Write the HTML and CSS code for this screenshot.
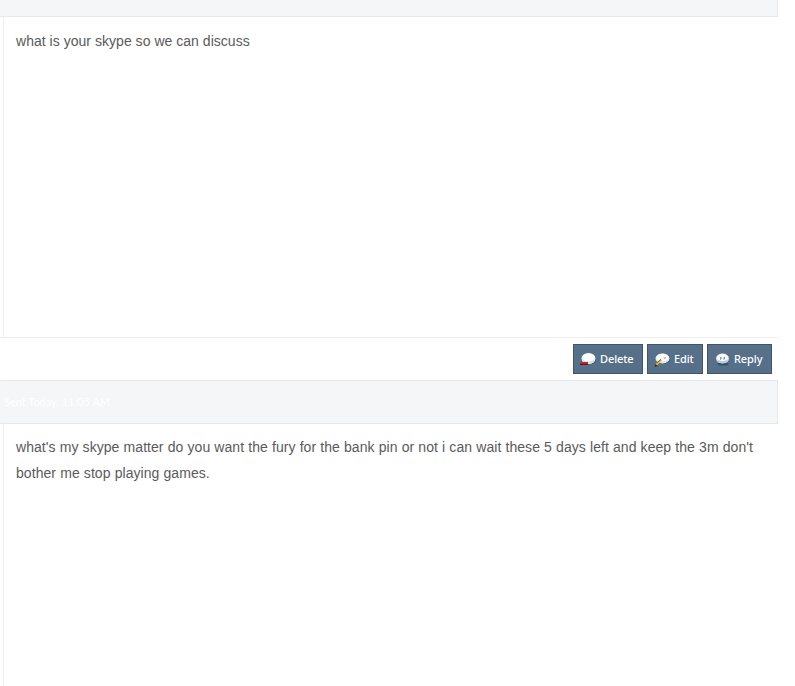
FILE: index.html
```html
<!DOCTYPE html>
<html lang="en">
<head>
<meta charset="utf-8">
<title>Messages</title>
<link rel="stylesheet" href="styles.css">
</head>
<body>
<div class="thread">
  <div class="head head-cut"></div>
  <div class="msg msg-short"><p>what is your skype so we can discuss</p></div>
  <div class="actions">
    <a class="btn btn-delete">
      <svg class="ico" viewBox="0 0 16 16" width="16" height="16"><ellipse cx="9.500" cy="8.500" rx="7" ry="5" fill="#2f4a62" opacity=".55"/><ellipse cx="8.500" cy="7.500" rx="7" ry="5.500" fill="#f1f4f6"/><ellipse cx="8.500" cy="9" rx="6" ry="3.500" fill="#d5dee5"/><ellipse cx="8.500" cy="6.500" rx="6" ry="4" fill="#fbfcfc"/><rect x="0" y="11" width="8" height="3" fill="#c4202c"/><rect x="0" y="13" width="8" height="1" fill="#6a1218"/></svg>
      <span>Delete</span></a>
    <a class="btn btn-edit">
      <svg class="ico" viewBox="0 0 16 16" width="16" height="16"><ellipse cx="9.500" cy="8" rx="7" ry="5" fill="#2f4a62" opacity=".55"/><ellipse cx="8.500" cy="7.500" rx="7" ry="5" fill="#e3e9ee"/><ellipse cx="8.500" cy="6.500" rx="6" ry="3.800" fill="#fbfcfc"/><circle cx="11" cy="7" r="1.100" fill="#eba7b0"/><path d="M0.500 16l1-3 5-5 1.500 1.500-5 5z" fill="#e6b53a"/><path d="M2.500 12l4-4 .6.6-4 4z" fill="#8a6a1c"/><path d="M0.500 16l1-3 2 2z" fill="#1d1d1d"/></svg>
      <span>Edit</span></a>
    <a class="btn btn-reply">
      <svg class="ico" viewBox="0 0 16 16" width="16" height="16"><ellipse cx="8" cy="13" rx="5.500" ry="1.500" fill="#2b4358" opacity=".7"/><ellipse cx="7.500" cy="7.500" rx="6.500" ry="5" fill="#dfe8ee"/><ellipse cx="7.500" cy="10" rx="5" ry="2.200" fill="#bccdda"/><ellipse cx="7.500" cy="6.500" rx="5.500" ry="3.500" fill="#fbfcfc"/><path d="M5 6h1.500v2h-.7v1h-.8zM8.500 6h1.500v2h-.7v1h-.8z" fill="#7b9db8"/></svg>
      <span>Reply</span></a>
  </div>
  <div class="head"><span class="sent">Sent Today, 11:05 AM</span></div>
  <div class="msg"><p>what's my skype matter do you want the fury for the bank pin or not i can wait these 5 days left and keep the 3m don't bother me stop playing games.</p></div>
</div>
</body>
</html>
```
FILE: styles.css
```css
html, body {
  margin: 0;
  padding: 0;
  background: #fff;
}
body {
  height: 686px;
  overflow: hidden;
}
.thread {
  width: 778px;
  font-family: "Liberation Sans", Arial, sans-serif;
  font-size: 14px;
  color: #5a5a5a;
}
.head {
  box-sizing: border-box;
  height: 44px;
  padding: 0 3px;
  display: flex;
  align-items: center;
  background: #f5f6f8;
  border: 1px solid #e6e7e9;
  border-left-color: #f5f6f8;
}
.head-cut {
  height: 17px;
  border-top: 0;
}
.sent {
  font-family: Lato, sans-serif;
  font-size: 11px;
  line-height: 14px;
  color: #fff;
}
.msg {
  box-sizing: border-box;
  height: 320px;
  margin-left: 3px;
  padding: 10px 12px;
  border-left: 1px solid #eeeeee;
}
.msg p {
  margin: 0;
  line-height: 26px;
  letter-spacing: 0.06px;
  word-spacing: 0.15px;
}
.msg-short {
  padding-top: 11px;
}
.msg-short p {
  letter-spacing: 0.03px;
  word-spacing: 0;
}
.actions {
  box-sizing: border-box;
  height: 43px;
  padding: 6px 6px 6px 0;
  display: flex;
  justify-content: flex-end;
  gap: 4px;
  border-top: 1px solid #eeeeee;
}
.btn {
  box-sizing: border-box;
  height: 30px;
  display: flex;
  align-items: center;
  gap: 4px;
  padding-left: 6px;
  background: #56708a;
  border: 1px solid #3f5568;
  color: #fff;
  font-family: "Noto Sans", sans-serif;
  font-size: 11px;
  font-weight: 500;
  letter-spacing: -0.1px;
  cursor: pointer;
}
.btn span {
  margin-top: -2px;
}
.btn-delete { width: 70px; }
.btn-edit { width: 56px; }
.btn-reply { width: 65px; padding-left: 7px; gap: 3px; }
.ico {
  flex: none;
}
```
